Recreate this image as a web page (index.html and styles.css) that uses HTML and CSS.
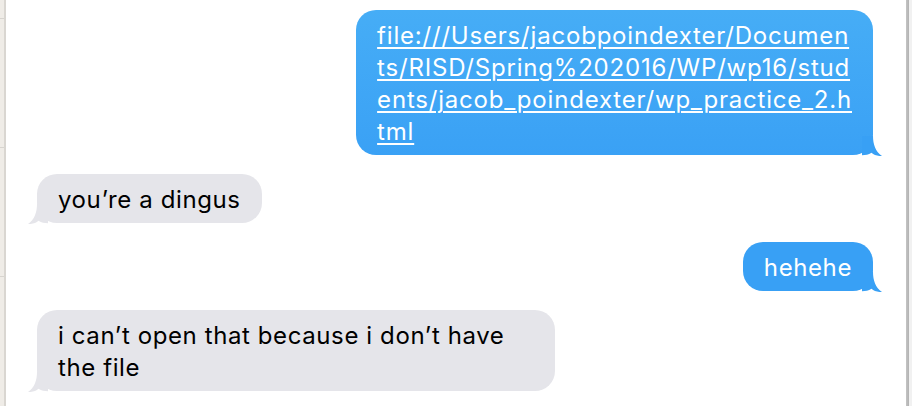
FILE: index.html
```html
<!DOCTYPE html>
<html lang="en">
<head>
<meta charset="utf-8">
<title>Messages</title>
<link rel="stylesheet" href="styles.css">
</head>
<body>
<div class="window">
  <aside class="sidebar">
    <div class="cell first"></div>
    <div class="cell"></div>
    <div class="cell"></div>
    <div class="cell last"></div>
  </aside>
  <main class="transcript">
    <div class="bubble me">
      <a class="link" href="#">file:///Users/jacobpoindexter/Documen<br>ts/RISD/Spring%202016/WP/wp16/stud<br>ents/jacob_poindexter/wp_practice_2.h<br>tml</a>
      <svg class="tail" width="20" height="20" viewBox="0 0 20 20"><path d="M0 0 L11 0 C11 8 13.5 16 20 20 C15.5 20.3 12 19 9.5 16.8 C6.5 18.6 3.5 19.3 0 19.3 Z"/></svg>
    </div>
    <div class="bubble them">
      you’re a dingus
      <svg class="tail" width="20" height="20" viewBox="0 0 20 20"><path d="M20 0 L9 0 C9 8 6.5 16 0 20 C4.5 20.3 8 19 10.5 16.8 C13.5 18.6 16.5 19.3 20 19.3 Z"/></svg>
    </div>
    <div class="bubble me short">
      hehehe
      <svg class="tail" width="20" height="20" viewBox="0 0 20 20"><path d="M0 0 L11 0 C11 8 13.5 16 20 20 C15.5 20.3 12 19 9.5 16.8 C6.5 18.6 3.5 19.3 0 19.3 Z"/></svg>
    </div>
    <div class="bubble them">
      i can’t open that because i don’t have the file
      <svg class="tail" width="20" height="20" viewBox="0 0 20 20"><path d="M20 0 L9 0 C9 8 6.5 16 0 20 C4.5 20.3 8 19 10.5 16.8 C13.5 18.6 16.5 19.3 20 19.3 Z"/></svg>
    </div>
  </main>
  <div class="scrollbar"></div>
</div>
</body>
</html>
```
FILE: styles.css
```css
html, body {
  margin: 0;
  padding: 0;
  background: #ffffff;
}

.window {
  display: flex;
  width: 912px;
  height: 406px;
  overflow: hidden;
  font-family: "Inter", "Helvetica Neue", "Liberation Sans", sans-serif;
  font-size: 24px;
  letter-spacing: 0.6px;
  line-height: 32px;
}

.sidebar {
  width: 4px;
  flex: none;
  background: #efece7;
  border-right: 2px solid #d9d6d1;
  display: flex;
  flex-direction: column;
}

.cell {
  height: 128px;
  flex: none;
  border-bottom: 1px solid #d7d4cf;
}

.cell.first {
  height: 18px;
}

.cell.last {
  border-bottom: none;
}

.transcript {
  flex: 1;
  display: flex;
  flex-direction: column;
  align-items: flex-start;
  gap: 19px;
  padding: 10px 33px 0 31px;
}

.bubble {
  position: relative;
  max-width: 518px;
  box-sizing: border-box;
  padding: 10px 21px 7px;
  border-radius: 20px;
}

.bubble.me {
  align-self: flex-end;
  color: #ffffff;
  background: linear-gradient(180deg, #46adf6 0%, #3aa1f5 100%);
}

.bubble.me.short {
  background: #38a0f5;
}

.bubble.them {
  color: #000000;
  background: #e5e5ea;
}

.link {
  color: #ffffff;
  letter-spacing: 0.8px;
  text-decoration: underline;
  text-decoration-thickness: 1.5px;
  text-underline-offset: 3px;
  white-space: nowrap;
}

.tail {
  position: absolute;
  bottom: -1px;
  display: block;
}

.me .tail {
  right: -9px;
  fill: #38a0f5;
}

.them .tail {
  left: -9px;
  fill: #e5e5ea;
}

.scrollbar {
  width: 3px;
  flex: none;
  background: linear-gradient(90deg, #c4c4c4, #b2b2b2);
  border-right: 3px solid #f1f1f1;
}
```
